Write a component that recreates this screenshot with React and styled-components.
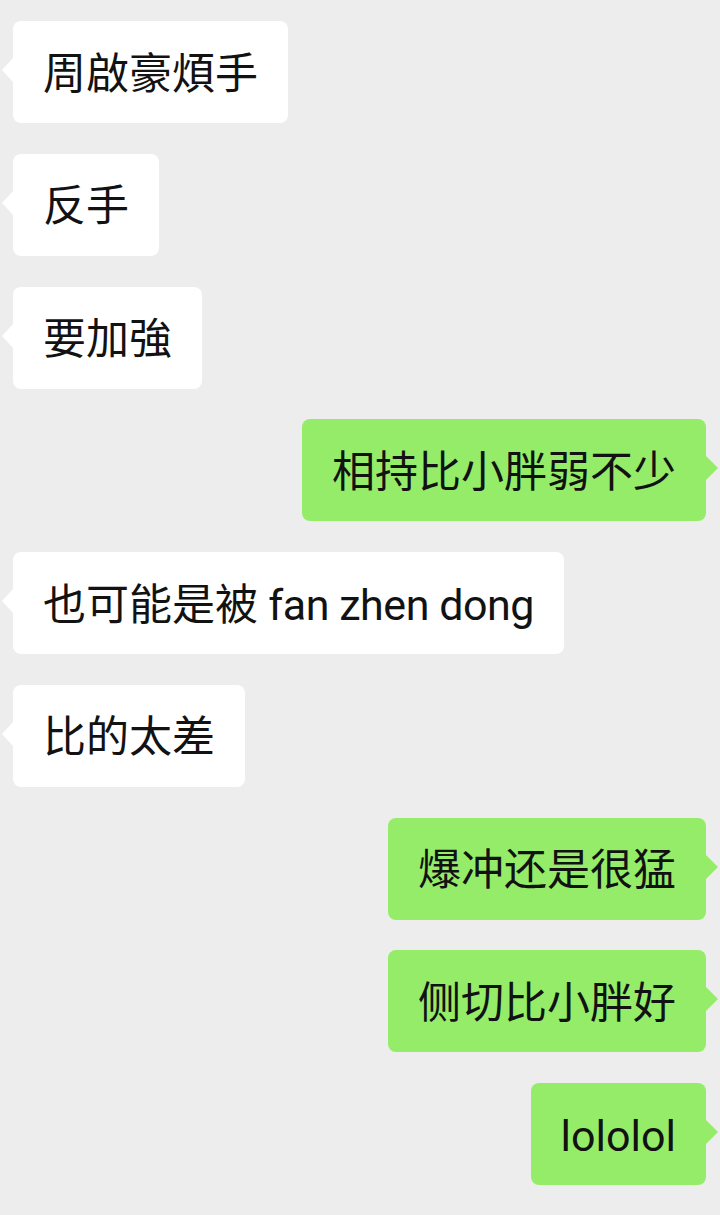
import React from "react";
import styled, { createGlobalStyle } from "styled-components";

const GlobalStyle = createGlobalStyle`
	html, body {
		margin: 0;
		padding: 0;
		background: #ededed;
	}
	body {
		font-family: Roboto, "Noto Sans CJK SC", "Noto Sans CJK TC", sans-serif;
		-webkit-font-smoothing: antialiased;
	}
`;

const messages = [
	{ from: "them", text: "周啟豪煩手" },
	{ from: "them", text: "反手" },
	{ from: "them", text: "要加強" },
	{ from: "me", text: "相持比小胖弱不少" },
	{ from: "them", text: "也可能是被", latin: " fan zhen dong" },
	{ from: "them", text: "比的太差" },
	{ from: "me", text: "爆冲还是很猛" },
	{ from: "me", text: "侧切比小胖好" },
	{ from: "me", text: "lololol" }
];

//chat log, one bubble per row
const ChatLog = styled.div`
	display: flex;
	flex-direction: column;
	gap: 30.75px;
	padding: 21px 14px 30px 13px;
	min-height: 1215px;
	box-sizing: border-box;
	background: #ededed;
`;

const Row = styled.div`
	display: flex;
	justify-content: ${props => (props.mine ? "flex-end" : "flex-start")};
`;

const Bubble = styled.div`
	position: relative;
	display: flex;
	align-items: center;
	height: 102px;
	box-sizing: border-box;
	padding: 4px 30px 0;
	border-radius: 8px;
	background: ${props => (props.mine ? "#95ec69" : "#ffffff")};
	color: #121212;
	font-size: 43px;
	line-height: 1;
	white-space: nowrap;

	/* little tail pointing at the speaker */
	&::before {
		content: "";
		position: absolute;
		top: 37px;
		${props => (props.mine ? "right: -12px;" : "left: -11px;")}
		width: 0;
		height: 0;
		border-top: 12px solid transparent;
		border-bottom: 12px solid transparent;
		${props =>
			props.mine
				? "border-left: 12px solid #95ec69;"
				: "border-right: 11px solid #ffffff;"}
	}
`;

// pinyin runs a touch tighter than Roboto's default
const Latin = styled.span`
	white-space: pre;
	letter-spacing: -0.45px;
`;

export default function App() {
	return (
		<React.Fragment>
			<GlobalStyle />
			<ChatLog>
				{messages.map((m, i) => (
					<Row key={i} mine={m.from === "me"}>
						<Bubble mine={m.from === "me"}>
							{m.text}
							{m.latin && <Latin>{m.latin}</Latin>}
						</Bubble>
					</Row>
				))}
			</ChatLog>
		</React.Fragment>
	);
}
